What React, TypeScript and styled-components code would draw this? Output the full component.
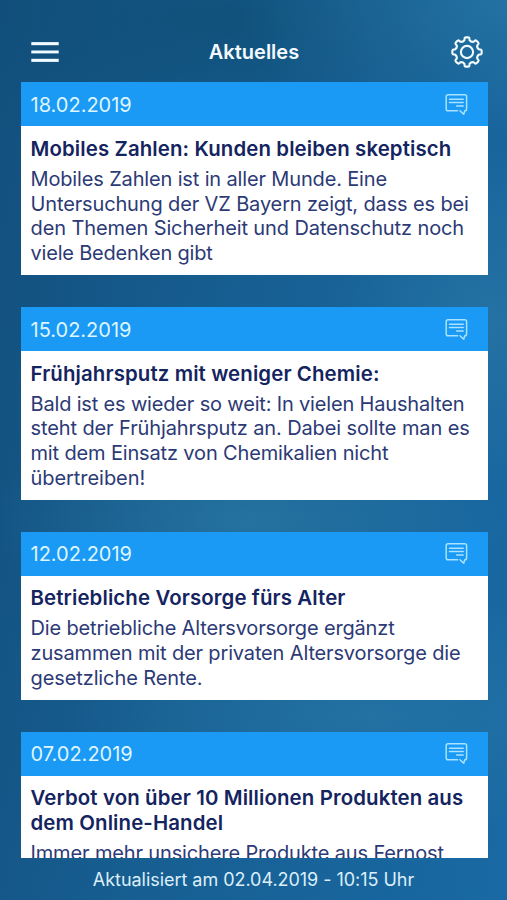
import React from 'react';
import styled, { createGlobalStyle } from 'styled-components';

const GlobalStyle = createGlobalStyle`
  * { box-sizing: border-box; }
  body { margin: 0; background: #155a8a; }
`;

const Screen = styled.div`
  display: flex;
  flex-direction: column;
  width: 507px;
  height: 900px;
  overflow: hidden;
  font-family: Inter, 'Liberation Sans', sans-serif;
  background:
    radial-gradient(ellipse 270px 130px at 507px 5px, rgba(42, 124, 170, 0.6), transparent),
    radial-gradient(ellipse 260px 110px at 250px 520px, rgba(48, 128, 168, 0.55), transparent),
    radial-gradient(ellipse 300px 120px at 370px 715px, rgba(44, 124, 168, 0.55), transparent),
    radial-gradient(ellipse 160px 170px at 490px 320px, rgba(44, 122, 166, 0.6), transparent),
    radial-gradient(ellipse 330px 130px at 230px 20px, rgba(14, 76, 116, 0.7), transparent),
    linear-gradient(100deg, #124f7d 0%, #175f92 45%, #1969a4 100%);
`;

const TopBar = styled.header`
  display: grid;
  grid-template-columns: 36px 1fr 36px;
  align-items: center;
  flex: none;
  height: 82.3px;
  padding: 22px 22px 0 27px;
`;

const IconButton = styled.button`
  display: flex;
  align-items: center;
  justify-content: center;
  width: 36px;
  height: 36px;
  padding: 0;
  border: 0;
  background: none;
  color: #f2fbff;
`;

const PageTitle = styled.h1`
  margin: 0;
  padding-right: 4px;
  color: #f4faff;
  font-size: 20px;
  font-weight: 600;
  line-height: 24px;
  text-align: center;
`;

const Feed = styled.main`
  flex: none;
  height: 776.2px;
  padding: 0 19.5px 0 20.5px;
  overflow: hidden;
`;

const Card = styled.article`
  margin-bottom: 31.8px;
  background: #fff;
`;

const CardHeader = styled.div`
  display: flex;
  align-items: center;
  justify-content: space-between;
  height: 44.2px;
  padding: 0 20px 0 10px;
  background: #1a9af4;
  color: #dff5ff;
`;

const CardDate = styled.time`
  padding-top: 1px;
  font-size: 20px;
  line-height: 24px;
`;

const CardBody = styled.div`
  padding: 10.6px 0 9.3px 10px;
`;

const Headline = styled.h2`
  margin: 0 0 5.3px;
  color: #14245f;
  font-size: 20.4px;
  font-weight: 600;
  line-height: 24.7px;
`;

const Summary = styled.p`
  margin: 0;
  color: #2c3a76;
  font-size: 20px;
  line-height: 24.7px;
`;

const Line = styled.span<{ $track?: number }>`
  display: block;
  white-space: nowrap;
  letter-spacing: ${({ $track = 0 }) => $track}px;
`;

const Status = styled.footer`
  flex: 1;
  padding-top: 11px;
  color: #dceffa;
  font-size: 18px;
  line-height: 22px;
  letter-spacing: -0.04px;
  text-align: center;
`;

interface Article {
  date: string;
  title: string[];
  lines: [text: string, track: number][];
}

const articles: Article[] = [
  {
    date: '18.02.2019',
    title: ['Mobiles Zahlen: Kunden bleiben skeptisch'],
    lines: [
      ['Mobiles Zahlen ist in aller Munde. Eine', -0.15],
      ['Untersuchung der VZ Bayern zeigt, dass es bei', -0.14],
      ['den Themen Sicherheit und Datenschutz noch', -0.11],
      ['viele Bedenken gibt', -0.2],
    ],
  },
  {
    date: '15.02.2019',
    title: ['Frühjahrsputz mit weniger Chemie:'],
    lines: [
      ['Bald ist es wieder so weit: In vielen Haushalten', -0.17],
      ['steht der Frühjahrsputz an. Dabei sollte man es', -0.11],
      ['mit dem Einsatz von Chemikalien nicht', -0.15],
      ['übertreiben!', -0.05],
    ],
  },
  {
    date: '12.02.2019',
    title: ['Betriebliche Vorsorge fürs Alter'],
    lines: [
      ['Die betriebliche Altersvorsorge ergänzt', -0.16],
      ['zusammen mit der privaten Altersvorsorge die', -0.15],
      ['gesetzliche Rente.', -0.1],
    ],
  },
  {
    date: '07.02.2019',
    title: ['Verbot von über 10 Millionen Produkten aus', 'dem Online-Handel'],
    lines: [['Immer mehr unsichere Produkte aus Fernost', -0.14]],
  },
];

const MenuIcon = () => (
  <svg width="28" height="22" viewBox="0 0 28 22" fill="currentColor">
    <rect x="0.3" y="1.1" width="27.4" height="3.1" />
    <rect x="0.3" y="9.5" width="27.4" height="2.9" />
    <rect x="0.3" y="17.8" width="27.4" height="3.1" />
  </svg>
);

const polar = (radius: number, degrees: number) => {
  const a = (degrees * Math.PI) / 180;
  return `${(16 + radius * Math.cos(a)).toFixed(2)} ${(16 + radius * Math.sin(a)).toFixed(2)}`;
};

const gearPath =
  Array.from({ length: 8 }, (_, i) => {
    const c = i * 45;
    return [
      `${i ? 'L' : 'M'}${polar(12.2, c - 12)}`,
      `L${polar(13.5, c - 10.5)}`,
      `Q${polar(14.7, c - 10)} ${polar(14.7, c - 5)}`,
      `L${polar(14.7, c + 5)}`,
      `Q${polar(14.7, c + 10)} ${polar(13.5, c + 10.5)}`,
      `L${polar(12.2, c + 12)}`,
      `Q${polar(10.6, c + 22.5)} ${polar(12.2, c + 33)}`,
    ].join('');
  }).join('') + 'Z';

const GearIcon = () => (
  <svg width="32" height="32" viewBox="0 0 32 32" fill="none" stroke="currentColor" strokeWidth="2.1" strokeLinejoin="round">
    <path d={gearPath} />
    <circle cx="16" cy="16" r="6.1" />
  </svg>
);

const CommentIcon = () => (
  <svg width="23" height="23" viewBox="0 0 23 23" fill="none" stroke="#a9e2ff" strokeWidth="1.5" strokeLinejoin="round" strokeLinecap="round">
    <path d="M12.5 17.8H3Q1.2 17.8 1.2 16V3.5Q1.2 1.7 3 1.7H19.8Q21.6 1.7 21.6 3.5V16Q21.6 17.8 19.8 17.8L18.7 21.3L15 17.8" />
    <path d="M4.5 6.2H18.2M4.5 9.6H18.2M11.6 13.1H18.2" />
  </svg>
);

export default function App() {
  return (
    <>
      <GlobalStyle />
      <Screen>
        <TopBar>
          <IconButton aria-label="Menü">
            <MenuIcon />
          </IconButton>
          <PageTitle>Aktuelles</PageTitle>
          <IconButton aria-label="Einstellungen">
            <GearIcon />
          </IconButton>
        </TopBar>
        <Feed>
          {articles.map(({ date, title, lines }) => (
            <Card key={date}>
              <CardHeader>
                <CardDate>{date}</CardDate>
                <CommentIcon />
              </CardHeader>
              <CardBody>
                <Headline>
                  {title.map((text) => (
                    <Line key={text} $track={0.12}>{text}</Line>
                  ))}
                </Headline>
                <Summary>
                  {lines.map(([text, track]) => (
                    <Line key={text} $track={track}>{text}</Line>
                  ))}
                </Summary>
              </CardBody>
            </Card>
          ))}
        </Feed>
        <Status>Aktualisiert am 02.04.2019 - 10:15 Uhr</Status>
      </Screen>
    </>
  );
}
